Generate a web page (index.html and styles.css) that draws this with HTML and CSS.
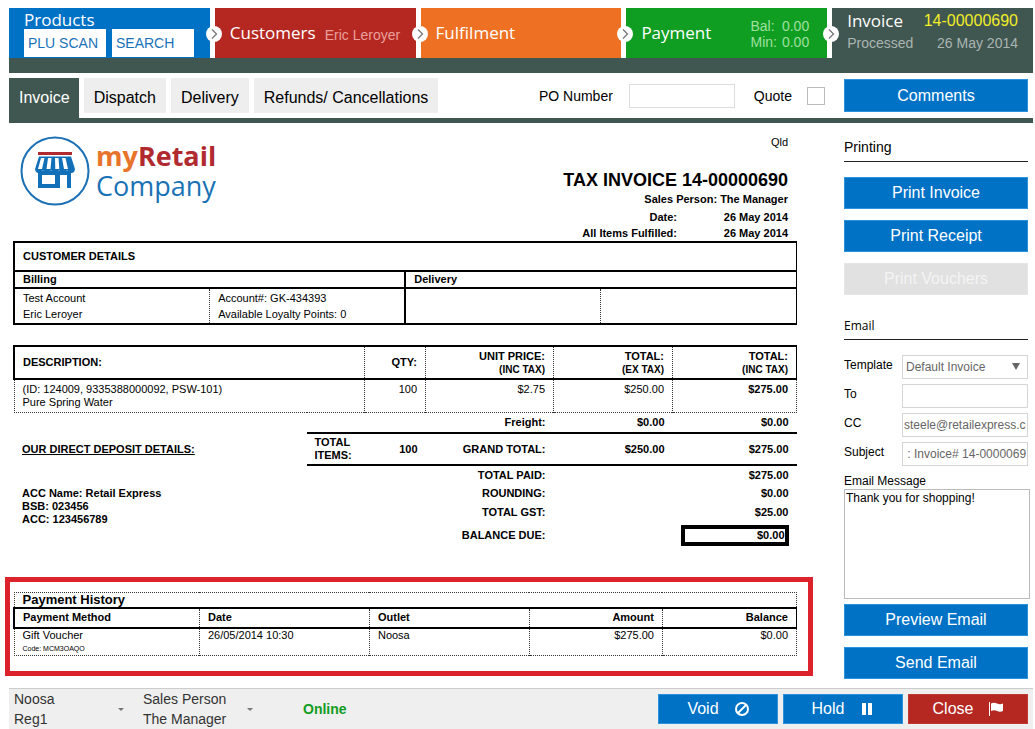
FILE: index.html
```html
<!DOCTYPE html>
<html lang="en">
<head>
<meta charset="utf-8">
<title>Invoice 14-00000690</title>
<link rel="stylesheet" href="styles.css">
</head>
<body>
<header class="flow">
  <section class="step step-products">
    <span class="step-title">Products</span>
    <div class="product-actions"><button class="mini">PLU SCAN</button><button class="mini">SEARCH</button></div>
  </section>
  <section class="step step-customers">
    <svg class="arrow" viewBox="0 0 16 16"><circle cx="8" cy="8" r="8" fill="#fff"/><path d="M6 3.5 10.5 8 6 12.500" fill="none" stroke="#777" stroke-width="1.300"/></svg>
    <span class="step-title">Customers</span><span class="step-note">Eric Leroyer</span>
  </section>
  <section class="step step-fulfilment">
    <svg class="arrow" viewBox="0 0 16 16"><circle cx="8" cy="8" r="8" fill="#fff"/><path d="M6 3.5 10.5 8 6 12.500" fill="none" stroke="#777" stroke-width="1.300"/></svg>
    <span class="step-title">Fulfilment</span>
  </section>
  <section class="step step-payment">
    <svg class="arrow" viewBox="0 0 16 16"><circle cx="8" cy="8" r="8" fill="#fff"/><path d="M6 3.5 10.5 8 6 12.500" fill="none" stroke="#777" stroke-width="1.300"/></svg>
    <span class="step-title">Payment</span>
    <div class="amounts"><span>Bal:</span><span>0.00</span><span>Min:</span><span>0.00</span></div>
  </section>
  <section class="step step-invoice">
    <svg class="arrow" viewBox="0 0 16 16"><circle cx="8" cy="8" r="8" fill="#fff"/><path d="M6 3.5 10.5 8 6 12.500" fill="none" stroke="#777" stroke-width="1.300"/></svg>
    <div class="pair"><span class="step-title">Invoice</span><span class="invoice-no">14-00000690</span></div>
    <div class="pair muted"><span>Processed</span><span>26 May 2014</span></div>
  </section>
</header>

<nav class="toolbar">
  <div class="tabs">
    <button class="tab tab-active">Invoice</button>
    <button class="tab">Dispatch</button>
    <button class="tab">Delivery</button>
    <button class="tab">Refunds/ Cancellations</button>
  </div>
  <label class="tool-label" for="po">PO Number</label>
  <input class="po" id="po" type="text">
  <label class="tool-label" for="quote">Quote</label>
  <input class="quote" id="quote" type="checkbox">
  <button class="btn btn-comments">Comments</button>
</nav>

<main class="main">
  <article class="doc">
    <div class="doc-head">
      <div class="logo">
        <svg class="logo-mark" viewBox="0 0 70 70">
          <circle cx="35" cy="35" r="33.500" fill="#fff" stroke="#1c70b5" stroke-width="2"/>
          <rect x="18" y="16" width="34" height="3" fill="#b02a30"/>
          <path d="M19 20.500H51L55 33Q54.500 37 51.500 37Q48 37 47 34Q46 37 43 37Q40 37 39 34Q38 37 35 37Q32 37 31 34Q30 37 27 37Q24 37 23 34Q22 37 18.500 37Q15.500 37 15 33Z" fill="#1270b8"/>
          <path d="M21 22h3.500l-2.500 11h-4ZM28 22h3.500l-1 11h-4ZM35 22h3.500l.8 11h-4ZM42 22h3.500l2.500 11h-4Z" fill="#fff"/>
          <path fill-rule="evenodd" d="M18 35H51V52H47V39H40V52H18ZM22 39V48H35V39Z" fill="#1270b8"/>
        </svg>
        <div class="logo-text">
          <div class="logo-top"><span class="logo-my">my</span>Retail</div>
          <div class="logo-bottom">Company</div>
        </div>
      </div>
      <div class="doc-meta">
        <div class="state">Qld</div>
        <h1 class="doc-title">TAX INVOICE 14-00000690</h1>
        <div class="person">Sales Person: The Manager</div>
        <div class="meta-grid"><span>Date:</span><span>26 May 2014</span><span>All Items Fulfilled:</span><span>26 May 2014</span></div>
      </div>
    </div>

    <table class="sheet customer">
      <colgroup><col class="w25"><col class="w25"><col class="w25"><col class="w25"></colgroup>
      <tr class="r-title box"><th colspan="4">CUSTOMER DETAILS</th></tr>
      <tr class="r-sub box"><th colspan="2" class="edge">Billing</th><th colspan="2">Delivery</th></tr>
      <tr class="r-info box"><td class="dots">Test Account<br>Eric Leroyer</td><td class="edge">Account#: GK-434393<br>Available Loyalty Points: 0</td><td class="dots"></td><td></td></tr>
    </table>

    <table class="sheet items">
      <colgroup><col><col class="i-label"><col class="i-qty"><col class="i-unit"><col class="i-ex"><col class="i-inc"></colgroup>
      <tr class="r-head box"><th colspan="2" class="dots">DESCRIPTION:</th><th class="num dots">QTY:</th><th class="num dots">UNIT PRICE:<br><small>(INC TAX)</small></th><th class="num dots">TOTAL:<br><small>(EX TAX)</small></th><th class="num">TOTAL:<br><small>(INC TAX)</small></th></tr>
      <tr class="r-item dotbox"><td colspan="2" class="dots">(ID: 124009, 9335388000092, PSW-101)<br>Pure Spring Water</td><td class="num dots">100</td><td class="num dots">$2.75</td><td class="num dots">$250.00</td><td class="num"><b>$275.00</b></td></tr>
      <tr class="r-freight"><td colspan="3"></td><th class="num">Freight:</th><th class="num">$0.00</th><th class="num">$0.00</th></tr>
      <tr class="r-grand"><th><u>OUR DIRECT DEPOSIT DETAILS:</u></th><th class="line">TOTAL ITEMS:</th><th class="num line">100</th><th class="num line">GRAND TOTAL:</th><th class="num line">$250.00</th><th class="num line">$275.00</th></tr>
      <tr class="r-total"><th rowspan="4" class="bank">ACC Name: Retail Express<br>BSB: 023456<br>ACC: 123456789</th><th colspan="3" class="num">TOTAL PAID:</th><td></td><th class="num">$275.00</th></tr>
      <tr class="r-total"><th colspan="3" class="num">ROUNDING:</th><td></td><th class="num">$0.00</th></tr>
      <tr class="r-total"><th colspan="3" class="num">TOTAL GST:</th><td></td><th class="num">$25.00</th></tr>
      <tr class="r-balance"><th colspan="3" class="num">BALANCE DUE:</th><td></td><th class="num"><div class="balance">$0.00</div></th></tr>
    </table>

    <section class="history">
      <table class="sheet">
        <colgroup><col><col class="h-date"><col class="h-outlet"><col class="h-amount"><col class="h-balance"></colgroup>
        <tr class="r-caption dotbox"><th colspan="5">Payment History</th></tr>
        <tr class="r-hhead box"><th class="dots">Payment Method</th><th class="dots">Date</th><th class="dots">Outlet</th><th class="num dots">Amount</th><th class="num">Balance</th></tr>
        <tr class="r-hrow dotbox"><td class="dots">Gift Voucher<div class="code">Code: MCM3OAQO</div></td><td class="dots">26/05/2014 10:30</td><td class="dots">Noosa</td><td class="num dots">$275.00</td><td class="num">$0.00</td></tr>
      </table>
    </section>
  </article>

  <aside class="side">
    <h2 class="side-title">Printing</h2>
    <div class="stack">
      <button class="btn">Print Invoice</button>
      <button class="btn">Print Receipt</button>
      <button class="btn btn-off" disabled>Print Vouchers</button>
    </div>
    <h2 class="side-title side-email">Email</h2>
    <div class="form">
      <label for="tpl">Template</label>
      <div class="select-wrap"><select class="field" id="tpl"><option>Default Invoice</option></select><svg class="caret" viewBox="0 0 8 7"><path d="M0 0H8L4 7Z" fill="#666"/></svg></div>
      <label for="to">To</label><input class="field" id="to" type="text">
      <label for="cc">CC</label><input class="field" id="cc" type="text" value="steele@retailexpress.com">
      <label for="subject">Subject</label><input class="field" id="subject" type="text" value=" : Invoice# 14-00000690">
    </div>
    <label class="msg-label" for="msg">Email Message</label>
    <textarea class="msg" id="msg">Thank you for shopping!</textarea>
    <div class="stack">
      <button class="btn">Preview Email</button>
      <button class="btn">Send Email</button>
    </div>
  </aside>
</main>

<footer class="footer">
  <button class="picker"><span>Noosa<br>Reg1</span><svg class="tick" viewBox="0 0 6 3"><path d="M0 0H6L3 3Z" fill="#777"/></svg></button>
  <button class="picker picker-person"><span>Sales Person<br>The Manager</span><svg class="tick" viewBox="0 0 6 3"><path d="M0 0H6L3 3Z" fill="#777"/></svg></button>
  <span class="online">Online</span>
  <div class="actions">
    <button class="btn act">Void<svg class="icon" viewBox="0 0 14 14"><circle cx="7" cy="7" r="6" fill="none" stroke="#fff" stroke-width="2"/><path d="M3 11 11 3" stroke="#fff" stroke-width="2"/></svg></button>
    <button class="btn act">Hold<svg class="icon" viewBox="0 0 14 14"><path d="M2 1H6V13H2ZM8 1H12V13H8Z" fill="#fff"/></svg></button>
    <button class="btn act btn-close">Close<svg class="icon" viewBox="0 0 14 14"><path d="M0 0H1V14H0ZM2 1.500Q5 0 8 1.500T14 1.500V9Q11 10.500 8 9T2 9Z" fill="#fff"/></svg></button>
  </div>
</footer>
</body>
</html>
```
FILE: styles.css
```css
* { box-sizing: border-box; }
body {
  margin: 0;
  padding-top: 8px;
  background: #fff;
  color: #000;
  font-family: "Liberation Sans", Arial, sans-serif;
  font-size: 14px;
}
button, input, select, textarea { font-family: inherit; margin: 0; border-radius: 0; }

.flow {
  display: grid;
  grid-template-columns: repeat(5, 1fr);
  column-gap: 5px;
  margin: 0 2px 0 9px;
  border-bottom: 15px solid #405650;
}
.step {
  position: relative;
  display: flex;
  align-items: center;
  min-height: 50px;
  padding: 0 15px;
  color: #fff;
  white-space: nowrap;
}
.step-title { font-family: "Open Sans", sans-serif; font-size: 17px; line-height: 24px; }
.step-products { background: #0072c6; flex-direction: column; align-items: flex-start; justify-content: flex-end; padding-bottom: 1px; }
.product-actions { display: flex; gap: 6px; }
.mini { width: 82px; height: 28px; padding: 0 4px; border: 0; background: #fff; color: #1a72b8; font-size: 14px; text-align: left; }
.step-products .step-title { line-height: 19px; }
.step-customers { background: #b52822; gap: 9px; }
.step-note { color: #e9a09c; padding-top: 4px; }
.step-fulfilment { background: #ed7023; }
.step-payment { background: #0f9d22; justify-content: space-between; padding-right: 18px; }
.amounts { display: grid; grid-template-columns: auto auto; column-gap: 5px; padding-top: 2px; line-height: 16px; color: #9fe0a0; }
.step-invoice { background: #405650; flex-direction: column; align-items: stretch; padding-top: 1px; }
.pair { display: flex; justify-content: space-between; align-items: center; }
.invoice-no { color: #f2ee28; font-size: 16px; }
.muted { color: #aab5b2; line-height: 20px; }
.arrow { position: absolute; left: -9px; top: 18px; width: 16px; height: 16px; }

.toolbar {
  display: flex;
  align-items: flex-start;
  margin: 5px 2px 0 9px;
  padding-right: 5px;
  border-bottom: 5px solid #405650;
}
.tabs { display: flex; gap: 5px; align-items: flex-start; margin-right: auto; }
.tab { height: 35px; padding: 4px 10px 0; border: 0; background: #eee; color: #000; font-size: 16px; }
.tab-active { height: 40px; padding: 0 9px 1px 10px; background: #405650; color: #fff; }
.tool-label { line-height: 36px; }
.po { width: 106px; height: 24px; margin: 6px 19px 0 16px; border: 1px solid #ddd; }
.quote { appearance: none; width: 18px; height: 18px; margin: 9px 19px 0 15px; border: 1px solid #bbb; background: #fff; }

.btn {
  height: 32px;
  padding: 0;
  border: 1px solid #2c92dc;
  background: #0072c6;
  color: #fff;
  font-size: 16px;
}
.btn-comments { width: 184px; height: 33px; margin-top: 1px; }
.btn-off { background: #e1e1e1; border-color: #e6e6e6; color: #f4f4f4; }

.main { display: flex; gap: 31px; padding: 0 7px 0 5px; }
.doc { flex: 1; min-width: 0; font-size: 11px; }
.doc-head { display: flex; justify-content: space-between; padding: 13px 25px 0 15px; }
.logo { display: flex; gap: 6px; align-items: flex-start; }
.logo-mark { width: 70px; height: 70px; }
.logo-text { font-family: "Open Sans", sans-serif; font-size: 27px; line-height: 30px; padding-top: 5px; }
.logo-top { color: #b02a30; font-weight: 700; }
.logo-my { color: #e8742c; }
.logo-bottom { color: #1a72b5; }
.doc-meta { text-align: right; font-weight: 700; line-height: 16px; }
.state { font-weight: 400; line-height: 13px; }
.doc-title { margin: 21px 0 0; font-size: 18px; line-height: 21px; }
.meta-grid { display: grid; grid-template-columns: 1fr 111px; padding-top: 2px; }

.sheet { width: calc(100% - 24px); margin-left: 8px; border-collapse: collapse; table-layout: fixed; font-size: 11px; line-height: 13px; }
.sheet th, .sheet td { padding: 0 8px; text-align: left; }
.sheet .num { text-align: right; }
.sheet small { font-size: 10px; }
.box { border: 1px solid #000; border-width: 2px 1px 2px 2px; }
.dotbox { border: 1px dotted #333; }
.sheet .dots { border-right: 1px dotted #333; }
.sheet .edge { border-right: 2px solid #000; }
.w25 { width: 25%; }
.r-title { height: 29px; }
.r-sub { height: 17px; }
.r-info { height: 36px; line-height: 16px; }
.items { margin-top: 20px; }
.i-label { width: 58px; }
.i-qty { width: 61px; }
.i-unit { width: 128px; }
.i-ex { width: 119px; }
.i-inc { width: 124px; }
.r-head { height: 33px; }
.r-item { height: 33px; }
.sheet .r-item td { vertical-align: top; padding-top: 3px; }
.r-freight { height: 21px; }
.r-grand { height: 32px; }
.sheet .line { border-top: 2px solid #000; border-bottom: 2px solid #000; }
.r-total { height: 19px; }
.sheet .bank { vertical-align: top; padding-top: 22px; }
.r-balance { height: 26px; }
.balance { border: 4px solid #000; }

.history { margin-top: 29px; padding: 10px 0 15px; border: 5px solid #dc232c; }
.history .sheet { width: calc(100% - 14px); margin-left: 3px; }
.h-date { width: 170px; }
.h-outlet { width: 160px; }
.h-amount { width: 133px; }
.h-balance { width: 134px; }
.r-caption { height: 15px; font-size: 13px; }
.r-hhead { height: 20px; }
.r-hrow { height: 28px; vertical-align: top; }
.code { font-size: 7px; }

.side { width: 184px; padding-top: 14px; }
.side-title { margin: 0 0 15px; padding-bottom: 3px; border-bottom: 1px solid #222; font-size: 14px; font-weight: 400; line-height: 21px; }
.side-email { margin: 20px 0 15px; font-family: "Open Sans", sans-serif; font-size: 12px; }
.stack { display: flex; flex-direction: column; gap: 11px; }
.form { display: grid; grid-template-columns: 58px 1fr; row-gap: 5px; font-size: 12px; line-height: 20px; }
.field { display: block; width: 100%; height: 24px; padding: 0 1px; border: 1px solid #d5d5d5; background: #fff; color: #666; font-size: 12px; }
.select-wrap { position: relative; }
select.field { appearance: none; padding: 0 3px; }
.caret { position: absolute; right: 8px; top: 8px; width: 8px; height: 7px; pointer-events: none; }
.msg-label { display: block; margin-top: 7px; font-size: 12px; line-height: 16px; }
.msg { display: block; width: calc(100% + 2px); height: 110px; margin-bottom: 5px; padding: 1px; border: 1px solid #bbb; color: #000; font-size: 12px; resize: none; }

.footer {
  display: flex;
  align-items: center;
  margin: 9px 2px 0 9px;
  padding-right: 5px;
  min-height: 41px;
  border-top: 1px solid #ccc;
  background: #efefef;
  color: #333;
}
.picker { display: flex; align-items: center; justify-content: space-between; width: 120px; padding: 0 5px; border: 0; background: none; color: #333; font-size: 14px; line-height: 20px; text-align: left; }
.picker-person { margin-left: 9px; }
.tick { width: 6px; height: 3px; }
.online { margin-left: 45px; color: #119c22; font-weight: 700; }
.actions { display: flex; gap: 5px; margin-left: auto; }
.act { display: flex; align-items: center; justify-content: center; gap: 16px; width: 120px; height: 30px; }
.icon { width: 14px; height: 14px; }
.btn-close { background: #b52822; border-color: #c03a34; }
```
